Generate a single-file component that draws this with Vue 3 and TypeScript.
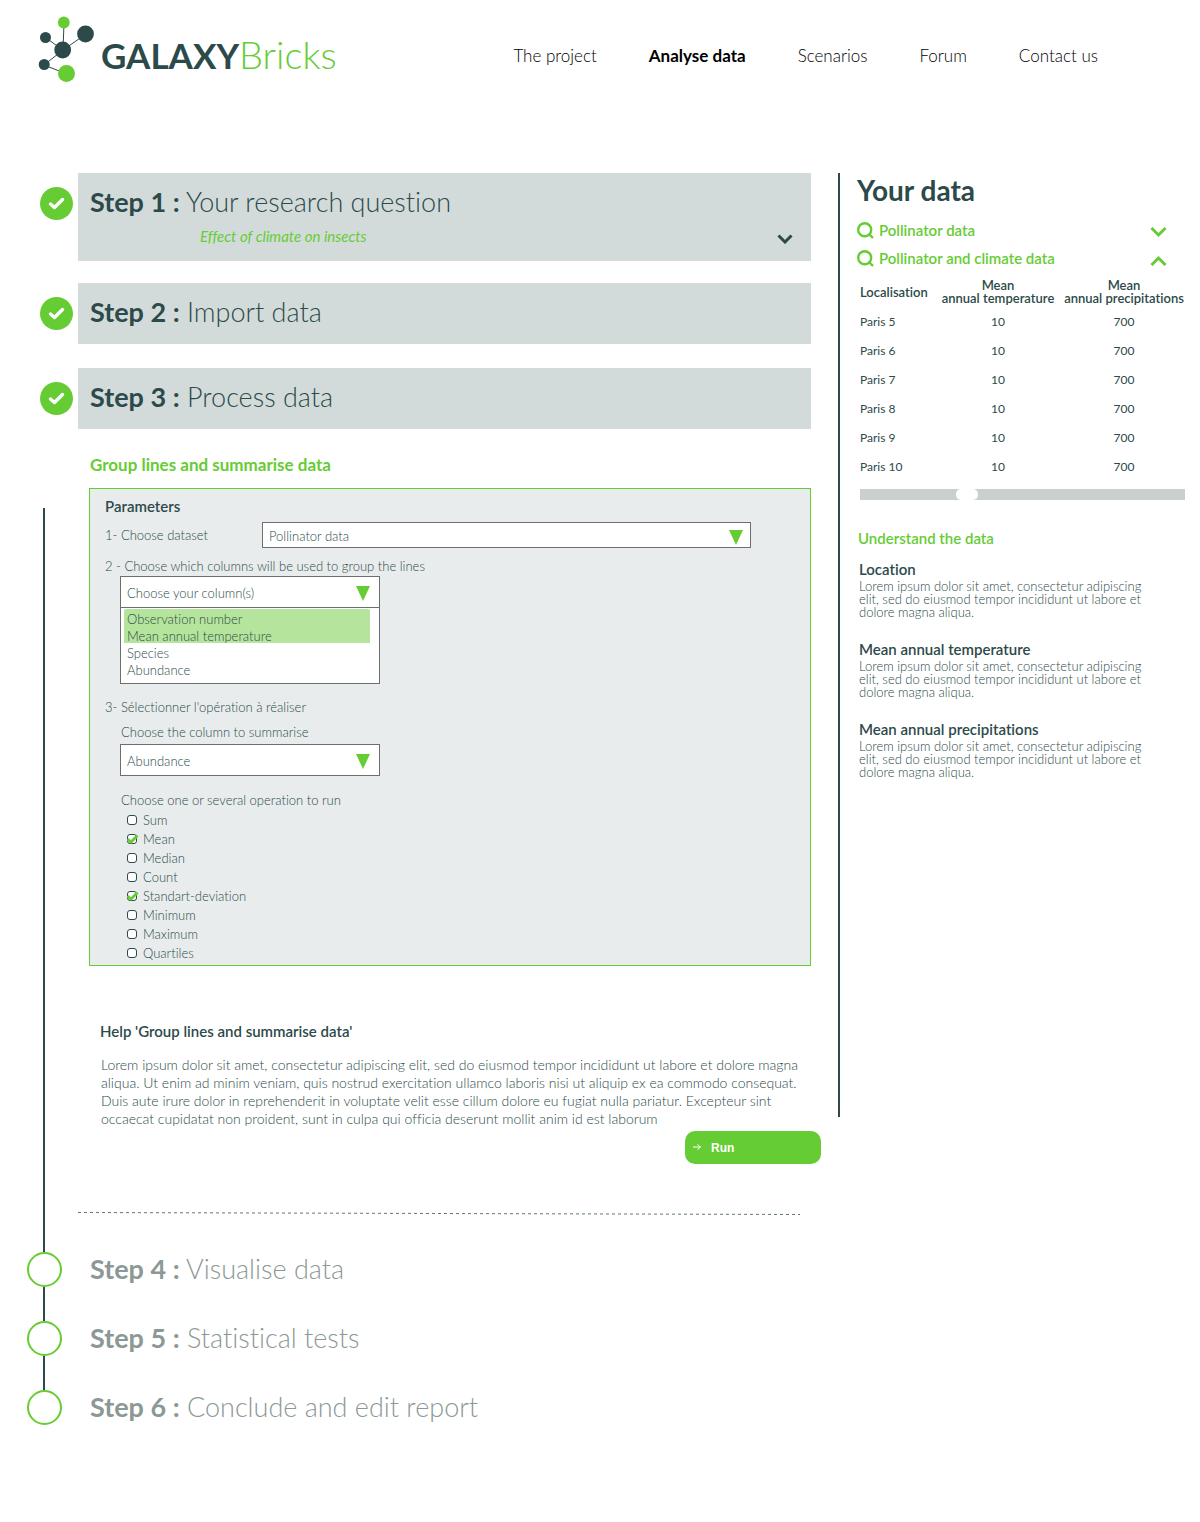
<script setup lang="ts">
import { ref } from 'vue'

interface Step {
  id: number
  title: string
  note?: string
}

interface Operation {
  name: string
  on: boolean
}

const nav = ['The project', 'Analyse data', 'Scenarios', 'Forum', 'Contact us']
const current = ref('Analyse data')

const doneSteps: Step[] = [
  { id: 1, title: 'Your research question', note: 'Effect of climate on insects' },
  { id: 2, title: 'Import data' },
  { id: 3, title: 'Process data' },
]
const nextSteps: Step[] = [
  { id: 4, title: 'Visualise data' },
  { id: 5, title: 'Statistical tests' },
  { id: 6, title: 'Conclude and edit report' },
]

const dataset = ref('Pollinator data')
const datasets = ['Pollinator data', 'Pollinator and climate data']
const columns = ['Observation number', 'Mean annual temperature', 'Species', 'Abundance']
const grouped = ref<string[]>(['Observation number', 'Mean annual temperature'])
const listOpen = ref(true)
const summarised = ref('Abundance')

const operations = ref<Operation[]>([
  { name: 'Sum', on: false },
  { name: 'Mean', on: true },
  { name: 'Median', on: false },
  { name: 'Count', on: false },
  { name: 'Standart-deviation', on: true },
  { name: 'Minimum', on: false },
  { name: 'Maximum', on: false },
  { name: 'Quartiles', on: false },
])

const places = ['Paris 5', 'Paris 6', 'Paris 7', 'Paris 8', 'Paris 9', 'Paris 10']
const notes = ['Location', 'Mean annual temperature', 'Mean annual precipitations']
</script>

<template>
  <div class="page">
    <header class="header">
      <a class="logo" href="#">
        <svg width="58" height="68" viewBox="0 0 58 68" aria-hidden="true">
          <g stroke="#2c4a4a" stroke-width="1">
            <path d="M26 8 25 35M8 23 25 35M48 19 25 35M25 35 6 50M6 50 29 59" fill="none" />
          </g>
          <g fill="#2c4a4a">
            <circle cx="7.500" cy="22.500" r="5.500" />
            <circle cx="47.500" cy="19" r="8.400" />
            <circle cx="24.700" cy="35" r="8.400" />
            <circle cx="6.200" cy="49.500" r="5.500" />
          </g>
          <g fill="#66cc33">
            <circle cx="25.800" cy="7.500" r="5.900" />
            <circle cx="28.500" cy="58.500" r="8.500" />
          </g>
        </svg>
        <span class="brand"><b>GALAXY</b><span>Bricks</span></span>
      </a>
      <nav class="nav">
        <a
          v-for="item in nav"
          :key="item"
          href="#"
          :class="{ active: item === current }"
          @click.prevent="current = item"
        >{{ item }}</a>
      </nav>
    </header>

    <div class="layout">
      <main class="main">
        <section v-for="step in doneSteps" :key="step.id" class="done">
          <svg class="badge" width="33" height="33" viewBox="0 0 33 33" aria-hidden="true">
            <circle cx="16.500" cy="16.500" r="16.500" fill="#66cc33" />
            <path d="M10.500 17 14.500 20.500 22.500 12.500" fill="none" stroke="#fff" stroke-width="3.400" stroke-linecap="round" stroke-linejoin="round" />
          </svg>
          <div class="card">
            <h2 class="step-title"><b>Step {{ step.id }} :</b> {{ step.title }}</h2>
            <div v-if="step.note" class="note">
              <em>{{ step.note }}</em>
              <button type="button" class="plain" aria-label="Show the question">
                <svg width="16" height="10" viewBox="0 0 16 10"><path d="M1.500 1.500 8 8 14.500 1.500" fill="none" stroke="#2c4a4a" stroke-width="3" /></svg>
              </button>
            </div>
          </div>
        </section>

        <div class="work">
          <div class="rail"></div>
          <div class="content">
            <h3 class="tool">Group lines and summarise data</h3>
            <form class="panel" @submit.prevent>
              <h4 class="sub">Parameters</h4>
              <div class="row">
                <label for="dataset">1- Choose dataset</label>
                <div class="picker wide">
                  <select id="dataset" v-model="dataset">
                    <option v-for="d in datasets" :key="d">{{ d }}</option>
                  </select>
                  <svg class="arrow" width="14" height="15" viewBox="0 0 14 15"><path d="M0 0H14L7 15Z" fill="#66cc33" /></svg>
                </div>
              </div>
              <label class="line group-label" for="columns">2 - Choose which columns will be used to group the lines</label>
              <div class="combo">
                <button type="button" class="combo-head" :aria-expanded="listOpen" @click="listOpen = !listOpen">
                  Choose your column(s)
                  <svg width="14" height="15" viewBox="0 0 14 15"><path d="M0 0H14L7 15Z" fill="#66cc33" /></svg>
                </button>
                <div v-show="listOpen" class="combo-list">
                  <select id="columns" v-model="grouped" multiple size="4">
                    <option v-for="c in columns" :key="c">{{ c }}</option>
                  </select>
                </div>
              </div>
              <p class="line third">3- Sélectionner l'opération à réaliser</p>
              <label class="line inner column-label" for="summary">Choose the column to summarise</label>
              <div class="picker tall">
                <select id="summary" v-model="summarised">
                  <option v-for="c in columns" :key="c">{{ c }}</option>
                </select>
                <svg class="arrow" width="14" height="15" viewBox="0 0 14 15"><path d="M0 0H14L7 15Z" fill="#66cc33" /></svg>
              </div>
              <fieldset class="ops">
                <legend class="line inner">Choose one or several operation to run</legend>
                <label v-for="op in operations" :key="op.name" class="op">
                  <span class="tick">
                    <input v-model="op.on" type="checkbox" />
                    <svg v-if="op.on" width="12" height="10" viewBox="0 0 12 10"><path d="M.5 5 4 8 10.500 1.500" fill="none" stroke="#66cc33" stroke-width="2.800" /></svg>
                  </span>
                  {{ op.name }}
                </label>
              </fieldset>
            </form>

            <section class="help">
              <h4 class="sub">Help 'Group lines and summarise data'</h4>
              <p>
                Lorem ipsum dolor sit amet, consectetur adipiscing elit, sed do eiusmod tempor incididunt ut labore et dolore magna<br />
                aliqua. Ut enim ad minim veniam, quis nostrud exercitation ullamco laboris nisi ut aliquip ex ea commodo consequat.<br />
                Duis aute irure dolor in reprehenderit in voluptate velit esse cillum dolore eu fugiat nulla pariatur. Excepteur sint<br />
                occaecat cupidatat non proident, sunt in culpa qui officia deserunt mollit anim id est laborum
              </p>
            </section>
            <button type="button" class="run">
              <svg width="8" height="8" viewBox="0 0 8 8"><path d="M0 3H7.500M4.500 .5 7.500 3 4.500 5.500" fill="none" stroke="#fff" /></svg>
              Run
            </button>
            <svg class="dashes" height="3" viewBox="0 0 722 3" preserveAspectRatio="none" aria-hidden="true">
              <path d="M0 .5 722 2.500" stroke="#5f7876" stroke-dasharray="3 3" />
            </svg>
          </div>
        </div>

        <section v-for="step in nextSteps" :key="step.id" class="next">
          <div class="marker"></div>
          <h2 class="step-title"><b>Step {{ step.id }} :</b> {{ step.title }}</h2>
        </section>
      </main>

      <aside class="aside">
        <h2 class="aside-title">Your data</h2>
        <button v-for="(d, i) in datasets" :key="d" type="button" class="source">
          <svg width="17" height="17" viewBox="0 0 17 17"><path d="M11.500 11.500 16 16" stroke="#66cc33" stroke-width="2.400" /><circle cx="7.700" cy="7.700" r="6.500" fill="none" stroke="#66cc33" stroke-width="2.400" /></svg>
          <span>{{ d }}</span>
          <svg width="17" height="15" viewBox="0 0 17 15"><path :d="i === 0 ? 'M1.500 5 8.500 12 15.500 5' : 'M1.500 14 8.500 7 15.500 14'" fill="none" stroke="#66cc33" stroke-width="3" /></svg>
        </button>
        <table>
          <colgroup><col class="c1" /><col class="c2" /><col class="c3" /></colgroup>
          <thead>
            <tr>
              <th>Localisation</th>
              <th>Mean<br />annual temperature</th>
              <th>Mean<br />annual precipitations</th>
            </tr>
          </thead>
          <tbody>
            <tr v-for="p in places" :key="p">
              <td>{{ p }}</td>
              <td>10</td>
              <td>700</td>
            </tr>
          </tbody>
        </table>
        <div class="scroll"><div class="thumb"></div></div>
        <h3 class="understand">Understand the data</h3>
        <section v-for="n in notes" :key="n" class="about">
          <h4 class="sub">{{ n }}</h4>
          <p>
            Lorem ipsum dolor sit amet, consectetur adipiscing<br />
            elit, sed do eiusmod tempor incididunt ut labore et<br />
            dolore magna aliqua.
          </p>
        </section>
      </aside>
    </div>
  </div>
</template>

<style>
body {
  margin: 0;
  background: #fff;
}
</style>

<style scoped>
.page {
  padding-bottom: 97px;
  color: #2c4a4a;
  font: 300 13px/16px Lato, "Open Sans", sans-serif;
  font-variant-ligatures: none;
}
.page * {
  box-sizing: border-box;
}
h2, h3, h4, p {
  margin: 0;
}
a {
  color: inherit;
  text-decoration: none;
}
button, select {
  font: inherit;
  font-variant-ligatures: none;
  color: inherit;
}
button {
  cursor: pointer;
}
svg {
  flex: none;
  display: block;
}
.header {
  display: flex;
  justify-content: space-between;
  align-items: flex-start;
  padding: 15px 102px 0 38px;
  height: 173px;
}
.logo {
  display: flex;
  gap: 5px;
}
.brand {
  padding-top: 17px;
  font-size: 38px;
  line-height: 44px;
  font-weight: 300;
  color: #66cc33;
}
.brand b {
  color: #2c4a4a;
  font-size: 35px;
  font-weight: 700;
}
.nav {
  display: flex;
  gap: 52px;
  padding-top: 31px;
  font-size: 17px;
  line-height: 20px;
  color: #000;
  white-space: nowrap;
}
.active {
  font-weight: 700;
}
.layout {
  display: grid;
  grid-template-columns: minmax(0, 1fr) 362px;
  align-items: start;
}
.main {
  padding: 0 27px;
}
.done {
  display: flex;
  gap: 5px;
  margin-bottom: 22px;
  padding-left: 13px;
}
.done:nth-of-type(2) {
  margin-bottom: 24px;
}
.done:nth-of-type(3) {
  margin-bottom: 0;
}
.badge {
  margin-top: 14px;
}
.card {
  flex: 1;
  padding: 14px 18px 17px 12px;
  background: #d3dbda;
}
.step-title {
  font-size: 27px;
  line-height: 30px;
  font-weight: 300;
  white-space: nowrap;
}
.step-title b {
  font-weight: 700;
}
.note {
  display: flex;
  justify-content: space-between;
  align-items: center;
  padding: 12px 0 0 110px;
  font-size: 15px;
  line-height: 15px;
  font-weight: 400;
  color: #66cc33;
}
.plain {
  padding: 5px 0 0;
  border: 0;
  background: none;
}
.work {
  display: flex;
  gap: 16px;
}
.rail {
  width: 35px;
  margin-top: 79px;
  background: linear-gradient(#2c4a4a, #2c4a4a) 16px 0 / 2px 100% no-repeat;
}
.content {
  flex: 1;
  min-width: 0;
  display: flex;
  flex-direction: column;
}
.tool {
  margin: 26px 0 13px 12px;
  font-size: 17px;
  line-height: 20px;
  color: #66cc33;
}
.panel {
  margin-left: 11px;
  padding: 7px 15px 3px;
  border: 1px solid #66cc33;
  background: #e8eced;
}
.sub {
  font-size: 15px;
  line-height: 20px;
  font-weight: 600;
}
.row {
  display: flex;
  align-items: center;
  margin-top: 6px;
}
.row label {
  width: 157px;
}
.line {
  display: block;
  padding: 0;
}
.inner {
  padding-left: 16px;
}
.group-label {
  margin-top: 10px;
}
.combo, .tall {
  width: 260px;
  margin: 2px 0 0 15px;
}
.tall {
  margin-top: 4px;
}
.picker {
  position: relative;
}
.wide {
  width: 489px;
}
.picker select {
  display: block;
  width: 100%;
  height: 26px;
  padding: 2px 6px 0;
  border: 1px solid #6d6e70;
  border-radius: 0;
  background: #fff;
  appearance: none;
}
.tall select {
  height: 32px;
}
.arrow {
  position: absolute;
  top: 8px;
  right: 8px;
  pointer-events: none;
}
.tall .arrow {
  top: 10px;
  right: 10px;
}
.combo-head {
  display: flex;
  justify-content: space-between;
  align-items: center;
  width: 100%;
  height: 32px;
  padding: 2px 9px 0 6px;
  border: 1px solid #6d6e70;
  background: #fff;
}
.combo-list {
  height: 76px;
  padding: 1px 9px 0 3px;
  border: 1px solid #6d6e70;
  border-top: 0;
  background: #fff;
}
.combo-list select {
  display: block;
  width: 100%;
  height: 70px;
  padding: 0;
  border: 0;
  outline: 0;
  background: #fff;
  overflow: hidden;
}
.combo-list option {
  height: 17px;
  min-height: 17px;
  padding: 2px 3px 0;
  line-height: 15px;
  font-weight: 300;
}
.combo-list option:checked {
  background: linear-gradient(#b5e59c, #b5e59c);
  -webkit-text-fill-color: #2c4a4a;
}
.third {
  margin-top: 15px;
}
.column-label {
  margin-top: 9px;
}
.ops {
  margin: 16px 0 0;
  padding: 0;
  border: 0;
}
.ops legend {
  margin-bottom: 2px;
}
.op {
  display: flex;
  align-items: center;
  gap: 6px;
  height: 19px;
  padding-left: 22px;
}
.tick {
  position: relative;
  width: 10px;
  height: 10px;
}
.tick input {
  display: block;
  width: 10px;
  height: 10px;
  margin: 0;
  border: 1px solid #2c4a4a;
  border-radius: 3px;
  background: #fff;
  appearance: none;
}
.tick svg {
  position: absolute;
  left: 0;
  top: 0;
  pointer-events: none;
}
.help {
  margin: 55px 0 0 22px;
}
.help p {
  margin: 15px 0 0 1px;
  font-size: 14px;
  line-height: 18px;
  white-space: nowrap;
}
.run {
  align-self: flex-end;
  display: flex;
  align-items: center;
  gap: 10px;
  width: 136px;
  height: 33px;
  margin: 3px -10px 48px 0;
  padding: 0 8px;
  border: 0;
  border-radius: 10px;
  background: #66cc33;
  color: #fff;
  font-family: "Liberation Sans", Arial, sans-serif;
  font-size: 12px;
  font-weight: 700;
}
.dashes {
  width: calc(100% - 11px);
  margin-bottom: 37px;
}
.next {
  display: flex;
  align-items: flex-end;
  gap: 28px;
  color: #8c9896;
}
.next .step-title {
  padding-bottom: 2px;
  line-height: 33px;
}
.marker {
  width: 35px;
  height: 35px;
  border: 2px solid #66cc33;
  border-radius: 50%;
}
.next + .next .marker {
  position: relative;
  margin-top: 34px;
}
.next + .next .marker::before {
  content: "";
  position: absolute;
  left: 14px;
  bottom: 33px;
  width: 2px;
  height: 34px;
  background: #2c4a4a;
}
.aside {
  padding: 0 11px 340px 17px;
  border-left: 2px solid #2c4a4a;
}
.aside-title {
  margin-bottom: 9px;
  font-size: 28px;
  line-height: 34px;
}
.source {
  display: flex;
  align-items: center;
  gap: 5px;
  width: 100%;
  height: 28px;
  padding: 0 22px 0 0;
  border: 0;
  background: none;
  color: #66cc33;
  font-size: 15px;
  font-weight: 600;
  text-align: left;
}
.source span {
  flex: 1;
}
table {
  width: 100%;
  margin-top: 5px;
  border-collapse: collapse;
  table-layout: fixed;
}
.c1 {
  width: 80px;
}
.c2 {
  width: 122px;
}
th, td {
  height: 29px;
  padding: 0;
  font-size: 12px;
  font-weight: 400;
  text-align: center;
  white-space: nowrap;
}
th {
  height: 30px;
  font-weight: 600;
  font-size: 13px;
  line-height: 13px;
}
th:first-child, td:first-child {
  padding-left: 3px;
  text-align: left;
}
.scroll {
  height: 11px;
  margin: 8px 4px 0 3px;
  padding-left: 29%;
  background: #cad0cf;
}
.thumb {
  width: 22px;
  height: 11px;
  border-radius: 5px;
  background: #fff;
}
.understand {
  margin: 28px 0 11px 1px;
  font-size: 15px;
  line-height: 20px;
  font-weight: 600;
  color: #66cc33;
}
.about {
  height: 80px;
  padding-left: 2px;
}
.about p {
  margin-top: 1px;
  line-height: 13px;
  white-space: nowrap;
}
.about:last-child {
  height: 58px;
}
</style>
